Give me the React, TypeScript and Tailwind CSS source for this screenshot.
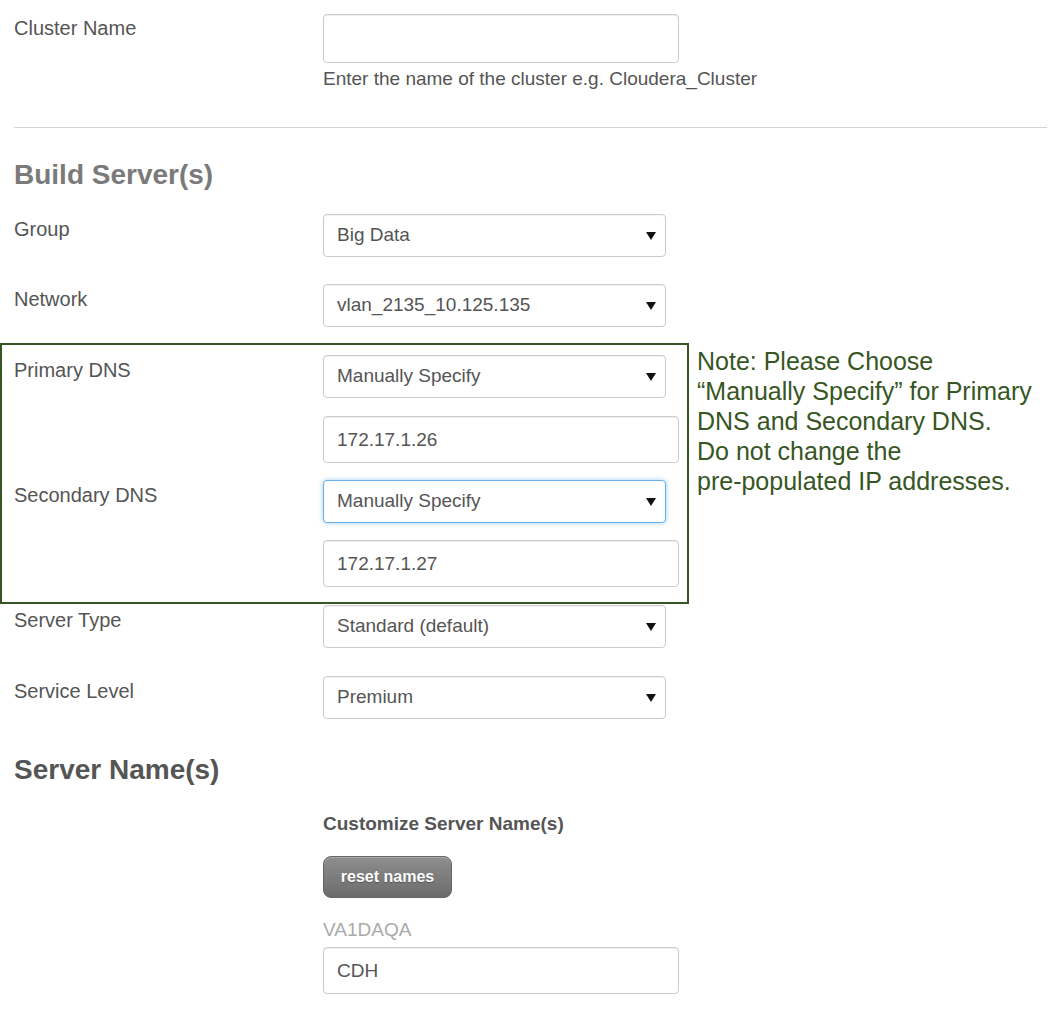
import React from "react";

const font = { fontFamily: '"Liberation Sans", Arial, Helvetica, sans-serif' };

const Arrow = () => (
  <svg
    className="pointer-events-none absolute right-[10px] top-1/2 -translate-y-1/2"
    width="10"
    height="8"
    viewBox="0 0 10 8"
  >
    <polygon points="0,0 10,0 5,8" fill="#111" />
  </svg>
);

interface SelectProps {
  value: string;
  focused?: boolean;
}

const FakeSelect = ({ value, focused }: SelectProps) => (
  <div className="relative w-[343px]">
    <select
      defaultValue={value}
      className={
        "block h-[43px] w-full appearance-none rounded-[4px] border bg-white pl-[13px] pr-8 text-[19px] text-[#555] outline-none " +
        (focused
          ? "border-[#66afe9] shadow-[0_0_5px_rgba(102,175,233,0.6)]"
          : "border-[#ccc] shadow-[inset_0_1px_1px_rgba(0,0,0,0.05)]")
      }
    >
      <option>{value}</option>
    </select>
    <Arrow />
  </div>
);

const TextInput = ({ value, h = "h-[47px]" }: { value: string; h?: string }) => (
  <input
    defaultValue={value}
    className={
      "block w-[356px] rounded-[4px] border border-[#ccc] bg-white px-[13px] text-[19px] text-[#555] outline-none shadow-[inset_0_1px_1px_rgba(0,0,0,0.075)] " +
      h
    }
  />
);

const Label = ({ children }: { children: React.ReactNode }) => (
  <div className="w-[309px] shrink-0 pt-[4px] text-[20px] leading-[22px] text-[#555]">{children}</div>
);

export default function App() {
  return (
    <div className="relative min-h-[1016px] w-[1059px] bg-white" style={font}>
      <div className="pl-[14px] pr-[12px] pt-[14px]">
        {/* cluster name */}
        <div className="flex">
          <div className="w-[309px] shrink-0 pt-[3px] text-[20px] leading-[22px] text-[#555]">Cluster Name</div>
          <div>
            <TextInput value="" h="h-[49px]" />
            <div className="mt-[5px] text-[19px] leading-[22px] text-[#555]">
              Enter the name of the cluster e.g. Cloudera_Cluster
            </div>
          </div>
        </div>

        <div className="mt-[37px] h-px bg-[#d4d4d4]" />

        <h2 className="mt-[32px] text-[28px] font-bold leading-[30px] text-[#7a7a7a]">Build Server(s)</h2>

        <div className="mt-[24px] flex">
          <Label>Group</Label>
          <FakeSelect value="Big Data" />
        </div>

        <div className="mt-[27px] flex">
          <Label>Network</Label>
          <FakeSelect value="vlan_2135_10.125.135" />
        </div>

        <div className="mt-[28px] flex">
          <Label>Primary DNS</Label>
          <div>
            <FakeSelect value="Manually Specify" />
            <div className="mt-[18px]">
              <TextInput value="172.17.1.26" />
            </div>
          </div>
        </div>

        <div className="mt-[17px] flex">
          <Label>Secondary DNS</Label>
          <div>
            <FakeSelect value="Manually Specify" focused />
            <div className="mt-[17px]">
              <TextInput value="172.17.1.27" />
            </div>
          </div>
        </div>

        <div className="mt-[18px] flex">
          <Label>Server Type</Label>
          <FakeSelect value="Standard (default)" />
        </div>

        <div className="mt-[28px] flex">
          <Label>Service Level</Label>
          <FakeSelect value="Premium" />
        </div>

        <h2 className="mt-[36px] text-[28px] font-bold leading-[30px] text-[#555]">Server Name(s)</h2>

        <div className="pl-[309px]">
          <div className="mt-[28px] text-[19px] font-bold leading-[22px] text-[#555]">Customize Server Name(s)</div>
          <button className="mt-[21px] h-[42px] w-[129px] rounded-[8px] border border-[#666] bg-gradient-to-b from-[#8e8e8e] to-[#6c6c6c] text-[16px] font-bold text-white [text-shadow:0_1px_1px_rgba(0,0,0,0.3)] shadow-[inset_0_1px_0_rgba(255,255,255,0.25)]">
            reset names
          </button>
          <div className="mt-[21px] text-[19px] leading-[22px] text-[#aaa]">VA1DAQA</div>
          <div className="mt-[6px]">
            <TextInput value="CDH" />
          </div>
        </div>
      </div>

      {/* annotation overlay */}
      <div className="pointer-events-none absolute left-0 top-[343px] h-[261px] w-[689px] border-2 border-[#375623]" />
      <div className="absolute left-[697px] top-[346px] text-[25px] leading-[30px] text-[#375623]">
        Note: Please Choose
        <br />
        “Manually Specify” for Primary
        <br />
        DNS and Secondary DNS.
        <br />
        Do not change the
        <br />
        pre-populated IP addresses.
      </div>
    </div>
  );
}
